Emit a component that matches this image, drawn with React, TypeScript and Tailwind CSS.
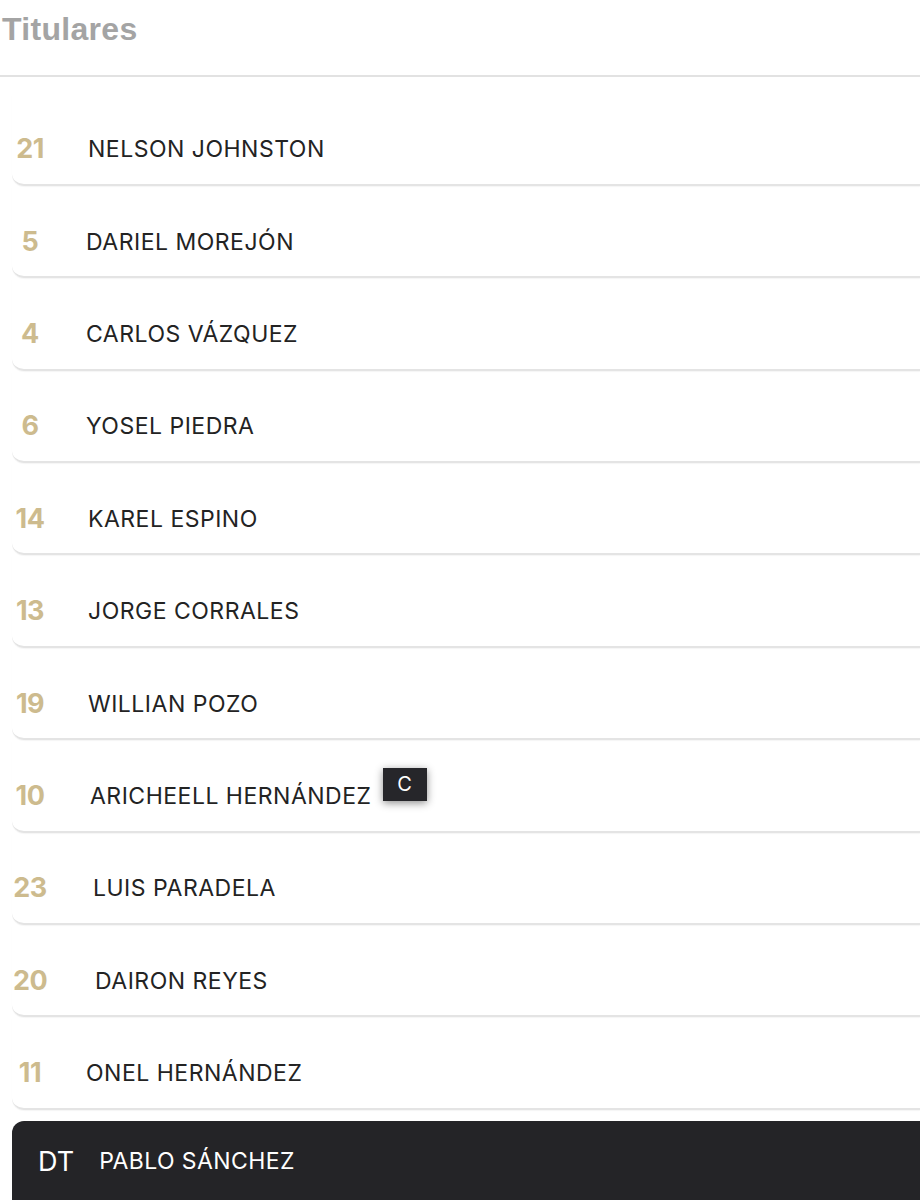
// App.tsx
const PLAYERS = [
  { num: "21", name: "NELSON JOHNSTON", nameClass: "ml-[40px]" },
  { num: "5", name: "DARIEL MOREJÓN", nameClass: "ml-[38px]" },
  { num: "4", name: "CARLOS VÁZQUEZ", nameClass: "ml-[38px]" },
  { num: "6", name: "YOSEL PIEDRA", nameClass: "ml-[38px]" },
  { num: "14", name: "KAREL ESPINO", nameClass: "ml-[40px]" },
  { num: "13", name: "JORGE CORRALES", nameClass: "ml-[40px]" },
  { num: "19", name: "WILLIAN POZO", nameClass: "ml-[40px]" },
  { num: "10", name: "ARICHEELL HERNÁNDEZ", nameClass: "ml-[42px]", captain: true },
  { num: "23", name: "LUIS PARADELA", nameClass: "ml-[45px]" },
  { num: "20", name: "DAIRON REYES", nameClass: "ml-[47px]" },
  { num: "11", name: "ONEL HERNÁNDEZ", nameClass: "ml-[38px]" },
];

function PlayerRow({ num, name, nameClass, captain }: (typeof PLAYERS)[number]) {
  return (
    <div className="ml-3 h-[92.4px] pt-[22px] flex items-center rounded-bl-xl border-b-2 border-[#e4e4e4] shadow-[0_1px_1px_rgba(0,0,0,0.04)]">
      <span className="-mt-[2px] w-9 text-center text-[27px] leading-none font-bold tracking-[-0.5px] text-[#cdbb8e] font-['Inter',sans-serif]">
        {num}
      </span>
      <span className={`${nameClass} text-[23px] leading-none tracking-[0.5px] text-[#232323] font-['Inter',sans-serif]`}>
        {name}
      </span>
      {captain && (
        <span className="relative -top-[5px] ml-[11px] -mt-[14px] w-11 h-[33px] flex items-center justify-center bg-[#26262a] text-white text-[20px] leading-none font-['Inter',sans-serif] shadow-[0_2px_8px_rgba(0,0,0,0.45)]">
          C
        </span>
      )}
    </div>
  );
}

export default function App() {
  return (
    <div className="w-[920px] bg-white overflow-hidden">
      {/* Header */}
      <div className="h-[77px] border-b-2 border-[#e2e2e2] pt-[9px]">
        <h2 className="pl-[2px] text-[32px] leading-[40px] font-bold tracking-[0.3px] text-[#a4a4a4] font-['Liberation_Sans',sans-serif]">
          Titulares
        </h2>
      </div>

      {/* Starters */}
      <div className="pt-[16.5px]">
        {PLAYERS.map((p) => (
          <PlayerRow key={p.num} {...p} />
        ))}
      </div>

      {/* Coach */}
      <div className="ml-3 mt-[11px] h-[90px] pl-[26px] flex items-center rounded-tl-xl bg-[#242427] text-white font-['Inter',sans-serif]">
        <span className="-mt-[8px] text-[27px] leading-none">DT</span>
        <span className="-mt-[8px] ml-[25px] text-[23px] leading-none tracking-[0.4px]">PABLO SÁNCHEZ</span>
      </div>
    </div>
  );
}
